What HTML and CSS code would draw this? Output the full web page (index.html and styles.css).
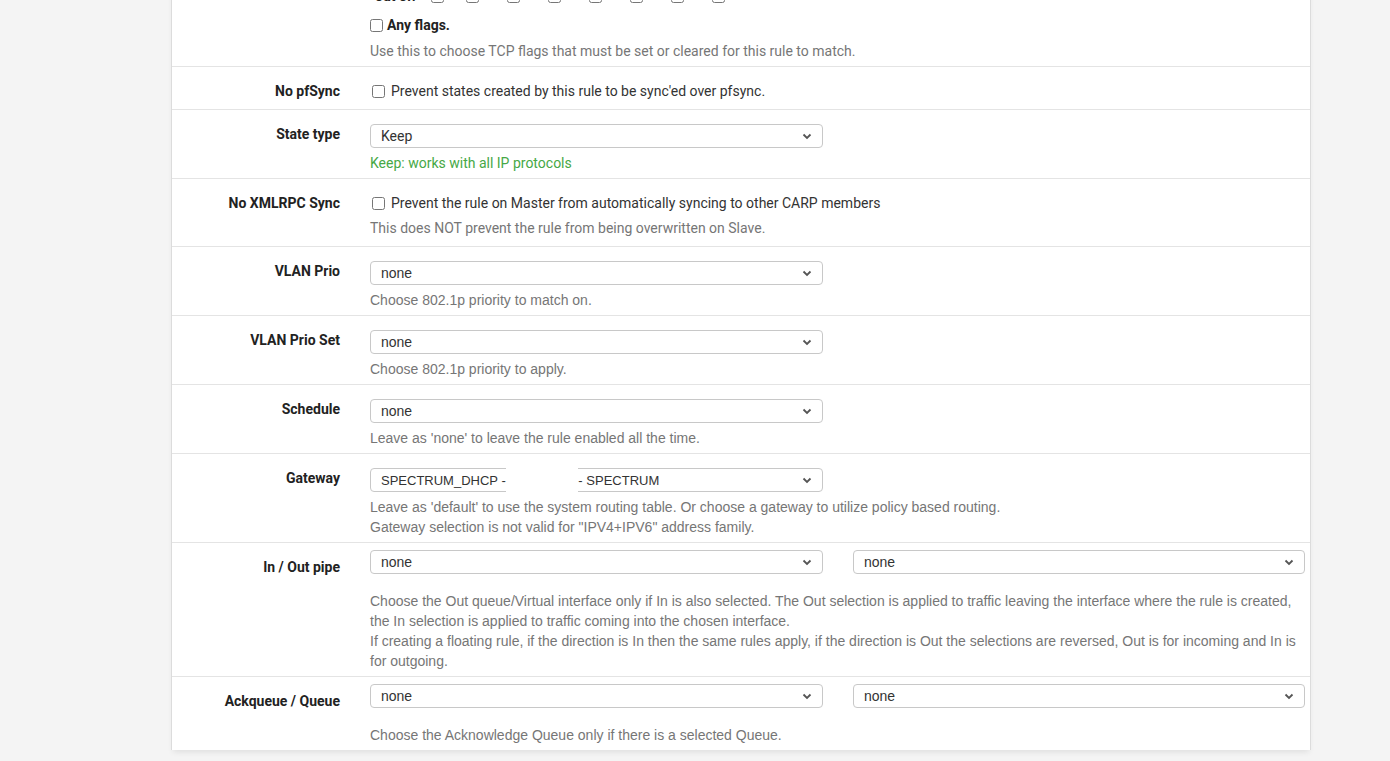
FILE: index.html
```html
<!DOCTYPE html>
<html>
<head>
<meta charset="utf-8">
<link rel="stylesheet" href="styles.css">
</head>
<body>
<div class="page">
  <div class="panel">
    <div class="row roboto first">
      <div class="label"></div>
      <div class="control">
        <div class="flags">
          <span class="flags-name">out of:</span>
          <span class="flag f1"><input type="checkbox"></span>
          <span class="flag"><input type="checkbox"></span>
          <span class="flag"><input type="checkbox"></span>
          <span class="flag"><input type="checkbox"></span>
          <span class="flag"><input type="checkbox"></span>
          <span class="flag"><input type="checkbox"></span>
          <span class="flag"><input type="checkbox"></span>
          <span class="flag"><input type="checkbox"></span>
        </div>
        <label class="anyflags"><input type="checkbox"><b>Any flags.</b></label>
        <div class="help">Use this to choose TCP flags that must be set or cleared for this rule to match.</div>
      </div>
    </div>

    <div class="row roboto chk">
      <div class="label">No pfSync</div>
      <div class="control">
        <label class="check"><input type="checkbox"><span>Prevent states created by this rule to be sync'ed over pfsync.</span></label>
      </div>
    </div>

    <div class="row roboto">
      <div class="label">State type</div>
      <div class="control">
        <div class="select"><span class="val">Keep</span><svg class="chev" width="10" height="7" viewBox="0 0 10 7"><path d="M1.5 1.5 L5 5 L8.5 1.5" fill="none" stroke="#555" stroke-width="1.8"/></svg></div>
        <div class="help green">Keep: works with all IP protocols</div>
      </div>
    </div>

    <div class="row roboto chk">
      <div class="label">No XMLRPC Sync</div>
      <div class="control">
        <label class="check"><input type="checkbox"><span>Prevent the rule on Master from automatically syncing to other CARP members</span></label>
        <div class="help">This does NOT prevent the rule from being overwritten on Slave.</div>
      </div>
    </div>

    <div class="row">
      <div class="label">VLAN Prio</div>
      <div class="control">
        <div class="select"><span class="val">none</span><svg class="chev" width="10" height="7" viewBox="0 0 10 7"><path d="M1.5 1.5 L5 5 L8.5 1.5" fill="none" stroke="#555" stroke-width="1.8"/></svg></div>
        <div class="help">Choose 802.1p priority to match on.</div>
      </div>
    </div>

    <div class="row">
      <div class="label">VLAN Prio Set</div>
      <div class="control">
        <div class="select"><span class="val">none</span><svg class="chev" width="10" height="7" viewBox="0 0 10 7"><path d="M1.5 1.5 L5 5 L8.5 1.5" fill="none" stroke="#555" stroke-width="1.8"/></svg></div>
        <div class="help">Choose 802.1p priority to apply.</div>
      </div>
    </div>

    <div class="row">
      <div class="label">Schedule</div>
      <div class="control">
        <div class="select"><span class="val">none</span><svg class="chev" width="10" height="7" viewBox="0 0 10 7"><path d="M1.5 1.5 L5 5 L8.5 1.5" fill="none" stroke="#555" stroke-width="1.8"/></svg></div>
        <div class="help">Leave as 'none' to leave the rule enabled all the time.</div>
      </div>
    </div>

    <div class="row">
      <div class="label">Gateway</div>
      <div class="control">
        <div class="select"><span class="val gw">SPECTRUM_DHCP - <span class="gap"></span>- SPECTRUM</span><svg class="chev" width="10" height="7" viewBox="0 0 10 7"><path d="M1.5 1.5 L5 5 L8.5 1.5" fill="none" stroke="#555" stroke-width="1.8"/></svg><span class="redact"></span></div>
        <div class="help">Leave as 'default' to use the system routing table. Or choose a gateway to utilize policy based routing.<br>Gateway selection is not valid for "IPV4+IPV6" address family.</div>
      </div>
    </div>

    <div class="row pair">
      <div class="label">In / Out pipe</div>
      <div class="control">
        <div class="selects">
          <div class="select"><span class="val">none</span><svg class="chev" width="10" height="7" viewBox="0 0 10 7"><path d="M1.5 1.5 L5 5 L8.5 1.5" fill="none" stroke="#555" stroke-width="1.8"/></svg></div>
          <div class="select"><span class="val">none</span><svg class="chev" width="10" height="7" viewBox="0 0 10 7"><path d="M1.5 1.5 L5 5 L8.5 1.5" fill="none" stroke="#555" stroke-width="1.8"/></svg></div>
        </div>
        <div class="help">Choose the Out queue/Virtual interface only if In is also selected. The Out selection is applied to traffic leaving the interface where the rule is created, the In selection is applied to traffic coming into the chosen interface.<br>If creating a floating rule, if the direction is In then the same rules apply, if the direction is Out the selections are reversed, Out is for incoming and In is for outgoing.</div>
      </div>
    </div>

    <div class="row pair last">
      <div class="label">Ackqueue / Queue</div>
      <div class="control">
        <div class="selects">
          <div class="select"><span class="val">none</span><svg class="chev" width="10" height="7" viewBox="0 0 10 7"><path d="M1.5 1.5 L5 5 L8.5 1.5" fill="none" stroke="#555" stroke-width="1.8"/></svg></div>
          <div class="select"><span class="val">none</span><svg class="chev" width="10" height="7" viewBox="0 0 10 7"><path d="M1.5 1.5 L5 5 L8.5 1.5" fill="none" stroke="#555" stroke-width="1.8"/></svg></div>
        </div>
        <div class="help">Choose the Acknowledge Queue only if there is a selected Queue.</div>
      </div>
    </div>
  </div>
</div>
</body>
</html>
```

FILE: styles.css
```css
html, body {
  margin: 0;
  padding: 0;
  background: #f4f4f4;
  height: 761px;
  overflow: hidden;
}

.page {
  padding-left: 171px;
  width: 1140px;
}

.panel {
  background: #fff;
  border-left: 1px solid #dcdcdc;
  border-right: 1px solid #dcdcdc;
  box-shadow: 0 4px 6px -2px rgba(0, 0, 0, 0.09);
  margin-top: -26px;
  font-family: "Liberation Sans", Arial, sans-serif;
  font-size: 14px;
  color: #333;
}

.row {
  display: grid;
  grid-template-columns: 168px 935px;
  column-gap: 30px;
  padding: 14px 0 5px;
  border-top: 1px solid #e4e4e4;
}

.row.first {
  border-top: none;
}

.row.first .help {
  margin-top: 6px;
}

.row.chk {
  padding-bottom: 8px;
}

.roboto {
  font-family: Roboto, "Liberation Sans", sans-serif;
}

.label {
  text-align: right;
  font-family: Roboto, "Liberation Sans", sans-serif;
  font-weight: bold;
  line-height: 20px;
  color: #222;
}

.control {
  min-width: 0;
}

.help {
  margin-top: 5px;
  line-height: 20px;
  color: #767676;
}

.help.green {
  color: #46a846;
}

/* TCP flags */
.flags {
  display: flex;
  align-items: center;
  height: 20px;
  margin-top: -2px;
}

.flags-name {
  flex: none;
  box-sizing: border-box;
  font-weight: bold;
  color: #222;
  width: 61px;
  padding-left: 5px;
}

.flag {
  flex: none;
  display: flex;
  width: 41px;
}

.flag.f1 {
  width: 35px;
}

input[type="checkbox"] {
  width: 13px;
  height: 13px;
  margin: 0;
}

.anyflags {
  display: flex;
  align-items: center;
  gap: 4px;
  line-height: 20px;
  margin-top: 9px;
  color: #222;
}

.check {
  display: flex;
  align-items: center;
  line-height: 20px;
  padding-left: 2px;
  color: #333;
}

.check span {
  margin-left: 6px;
}

/* select */
.select {
  position: relative;
  box-sizing: border-box;
  width: 453px;
  height: 24px;
  border: 1px solid #c8c8c8;
  border-radius: 4px;
  background: #fff;
  display: flex;
  align-items: center;
  justify-content: space-between;
  padding: 0 10px 0 10px;
  color: #333;
}

.val {
  white-space: pre;
}

.val.gw {
  font-size: 13px;
}

.gap {
  display: inline-block;
  width: 69px;
}

.chev {
  display: block;
}

.redact {
  position: absolute;
  left: 135px;
  width: 72px;
  top: -2px;
  bottom: -2px;
  background: #fff;
}

.row.pair .control {
  margin-top: -7px;
}

.selects {
  display: flex;
  gap: 30px;
}

.selects .select {
  width: 453px;
}

.selects .select + .select {
  width: 452px;
}

.row.pair .help {
  margin-top: 17px;
}

.row.last {
  padding-bottom: 5px;
}
```
